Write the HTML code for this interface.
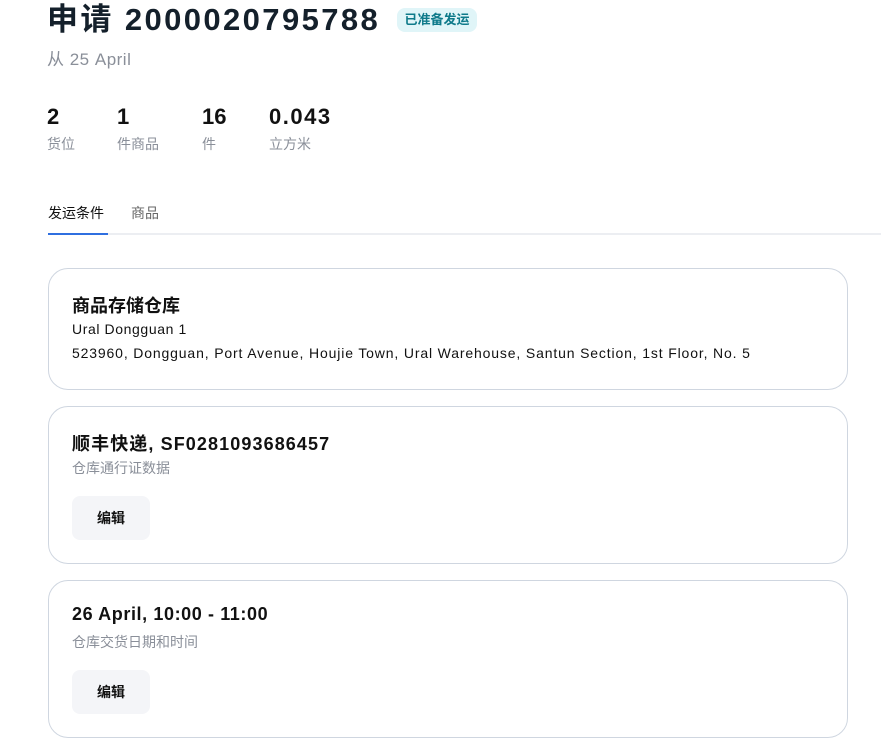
<!DOCTYPE html>
<html><head><meta charset="utf-8"><style>
*{margin:0;padding:0;box-sizing:border-box}
body{width:881px;height:754px;overflow:hidden;background:#fff;font-family:"Liberation Sans","Noto Sans CJK SC",sans-serif;color:#111;position:relative}
.a{position:absolute;white-space:nowrap}
.card{position:absolute;left:48px;width:800px;border:1px solid #cfd6e0;border-radius:20px}
.t{font-size:18px;font-weight:bold;color:#111}
.btn{position:absolute;left:23px;width:78px;height:44px;background:#f4f5f8;border-radius:8px;font-size:14px;font-weight:bold;text-align:center;line-height:44px}
.g{color:#8a8f99}
</style></head><body>
<div class="a" style="left:47px;top:-6px;font-size:31px;font-weight:bold;color:#14202b;letter-spacing:2.4px">申请 2000020795788</div>
<div class="a" style="left:397px;top:8px;width:80px;height:24px;background:#e0f5f8;border-radius:8px;color:#0e7a8a;font-size:13px;font-weight:bold;text-align:center;line-height:24px">已准备发运</div>
<div class="a g" style="left:47px;top:45px;font-size:17px;letter-spacing:0.5px">从 25 April</div>
<div class="a" style="left:47px;top:104px;font-size:22px;font-weight:bold">2</div>
<div class="a" style="left:117px;top:104px;font-size:22px;font-weight:bold">1</div>
<div class="a" style="left:202px;top:104px;font-size:22px;font-weight:bold">16</div>
<div class="a" style="left:269px;top:104px;font-size:22px;font-weight:bold;letter-spacing:1.5px">0.043</div>
<div class="a g" style="left:47px;top:134px;font-size:14px">货位</div>
<div class="a g" style="left:117px;top:134px;font-size:14px">件商品</div>
<div class="a g" style="left:202px;top:134px;font-size:14px">件</div>
<div class="a g" style="left:269px;top:134px;font-size:14px">立方米</div>
<div class="a" style="left:48px;top:203px;font-size:14px">发运条件</div>
<div class="a" style="left:131px;top:203px;font-size:14px;color:#666">商品</div>
<div class="a" style="left:48px;top:233px;width:833px;height:2px;background:#eceef2"></div>
<div class="a" style="left:48px;top:233px;width:60px;height:2px;background:#2f6fe0"></div>
<div class="card" style="top:268px;height:122px">
<div class="a t" style="left:23px;top:23px">商品存储仓库</div>
<div class="a" style="left:23px;top:52px;font-size:14px;letter-spacing:0.6px">Ural Dongguan 1</div>
<div class="a" style="left:23px;top:76px;font-size:14px;letter-spacing:0.85px">523960, Dongguan, Port Avenue, Houjie Town, Ural Warehouse, Santun Section, 1st Floor, No. 5</div>
</div>
<div class="card" style="top:406px;height:158px">
<div class="a t" style="left:23px;top:23px;letter-spacing:1.1px">顺丰快递, SF0281093686457</div>
<div class="a g" style="left:23px;top:51px;font-size:14px">仓库通行证数据</div>
<div class="btn" style="top:89px">编辑</div>
</div>
<div class="card" style="top:580px;height:158px">
<div class="a t" style="left:23px;top:23px;letter-spacing:0.6px">26 April, 10:00 - 11:00</div>
<div class="a g" style="left:23px;top:51px;font-size:14px">仓库交货日期和时间</div>
<div class="btn" style="top:89px">编辑</div>
</div>
</body></html>
